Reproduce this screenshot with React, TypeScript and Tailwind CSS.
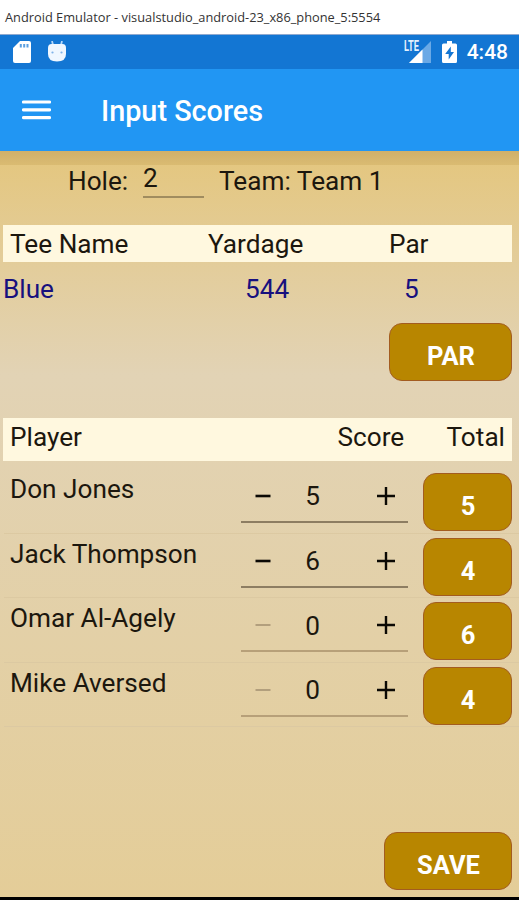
import clsx from "clsx";

interface Player {
  name: string;
  score: number;
  total: number;
}

const players: Player[] = [
  { name: "Don Jones", score: 5, total: 5 },
  { name: "Jack Thompson", score: 6, total: 4 },
  { name: "Omar Al-Agely", score: 0, total: 6 },
  { name: "Mike Aversed", score: 0, total: 4 },
];

function StatusBar() {
  return (
    <div className="flex h-[34px] items-center bg-[#1376d3] pr-[11px] pl-[13px] text-white">
      <svg width="18" height="22" viewBox="0 0 18 22" aria-hidden="true">
        <path d="M7 0h9a2 2 0 0 1 2 2v18a2 2 0 0 1-2 2H2a2 2 0 0 1-2-2V7z" fill="#fff" />
        <path d="M7.800 3v3.500M11.200 3v3.500M14.500 3v3.500" stroke="#5b9fe0" strokeWidth="2" />
      </svg>
      <svg className="ml-[17px]" width="18" height="22" viewBox="0 0 18 22" aria-hidden="true">
        <path d="M4 0l1 4M14 0l-1 4" stroke="#b5d7f9" strokeWidth="1.800" />
        <path d="M0 7q0-4 3.500-4h11q3.500 0 3.500 4v6q0 7.500-9 7.500t-9-7.500z" fill="#f0f7ff" />
        <circle cx="4.500" cy="11.500" r="1.100" fill="#7fb3e8" />
        <circle cx="13.500" cy="11.500" r="1.100" fill="#7fb3e8" />
      </svg>
      <div className="relative ml-auto h-[22px] w-[27px]">
        <svg className="absolute right-0 bottom-0" width="22" height="22" viewBox="0 0 22 22" aria-hidden="true">
          <path d="M22 0v22H0z" fill="#6aa9e6" />
          <path d="M13.500 8.500V22H0z" fill="#fff" />
        </svg>
        <span className="absolute top-0 left-0 origin-left scale-x-[0.66] text-[14px] leading-[10px] font-bold text-[#e3f0fd]">
          LTE
        </span>
      </div>
      <svg className="ml-[11px]" width="15" height="22" viewBox="0 0 15 22" aria-hidden="true">
        <path d="M5 0h5v2.500h3.500A1.500 1.500 0 0 1 15 4v16.500a1.500 1.500 0 0 1-1.500 1.500h-12A1.500 1.500 0 0 1 0 20.500V4a1.500 1.500 0 0 1 1.500-1.500H5z" fill="#fff" />
        <path d="M8.800 5.500L3.200 13h3.500v5.500L12 11H8.800z" fill="#1376d3" />
      </svg>
      <span className="ml-[10px] pt-px text-[21px] leading-none font-medium">4:48</span>
    </div>
  );
}

function GoldButton({ label, className }: { label: string | number; className?: string }) {
  return (
    <button
      type="button"
      className={clsx(
        "flex h-[58px] shrink-0 items-center justify-center rounded-[13px] border border-[#a35c20] bg-[#b88600] pt-[10px] pl-px text-[25.500px] leading-none font-bold text-white",
        className,
      )}
    >
      {label}
    </button>
  );
}

function Stepper({ value }: { value: number }) {
  const empty = value === 0;
  return (
    <div
      className={clsx(
        "flex h-[50px] w-[167px] items-center border-b-2 pr-[13px] pl-[14px]",
        empty ? "border-[#b7a079]" : "border-[#8d7d62]",
      )}
    >
      <svg className="mb-[2px]" width="16" height="18" viewBox="0 0 16 18" aria-label="Decrease">
        <path
          d="M0.500 9h15"
          stroke={empty ? "#b29f7d" : "#0b0904"}
          strokeWidth={empty ? 2 : 2.600}
        />
      </svg>
      <span className="w-[83px] text-center">{value}</span>
      <svg className="mb-[2px] ml-auto" width="18" height="18" viewBox="0 0 18 18" aria-label="Increase">
        <path d="M0 9h18M9 0v18" stroke="#0b0904" strokeWidth="2.400" />
      </svg>
    </div>
  );
}

function PlayerRow({ player }: { player: Player }) {
  return (
    <div className="ml-1 flex h-[64.600px] items-start border-b border-[#dcc9a2] pt-1 pl-[6px]">
      <span className="w-[231px] leading-[32px]">{player.name}</span>
      <Stepper value={player.score} />
      <GoldButton label={player.total} className="ml-[15px] w-[89px]" />
    </div>
  );
}

export default function App() {
  return (
    <div className="flex h-[900px] w-[519px] flex-col overflow-hidden bg-black font-['Roboto',sans-serif] text-[26.200px] text-[#1c170e]">
      <div className="flex h-[35px] items-center border-b border-[#8fa9cf] bg-white pt-px pl-[5px] font-['Open_Sans',sans-serif] text-[12.800px] whitespace-nowrap text-[#333]">
        Android Emulator - visualstudio_android-23_x86_phone_5:5554
      </div>
      <StatusBar />
      <header className="flex h-[82px] items-center bg-[#2196f3] pl-[22px] text-white">
        <svg width="29" height="20" viewBox="0 0 29 20" aria-label="Menu">
          <path d="M1.500 2h26M1.500 9.800h26M1.500 17.600h26" stroke="#fff" strokeWidth="3.200" strokeLinecap="round" />
        </svg>
        <h1 className="ml-[50px] pt-[3px] text-[28.800px] font-medium">Input Scores</h1>
      </header>

      <main className="flex h-[746px] flex-col bg-linear-to-b from-[#e4c67d] via-[#e2d3b5] via-30% to-[#e4cd98]">
        <div className="h-[14px] shrink-0 bg-linear-to-b from-[#d0b06a] to-[#dabb72]" />
        <div className="flex h-[60px] shrink-0 items-start pl-[68px] leading-8">
          <span className="w-[75px]">Hole:</span>
          <span className="h-[33px] w-[61px] border-b-2 border-[#a08c5f] leading-[26px]">2</span>
          <span className="ml-[15px]">Team: Team 1</span>
        </div>

        <div className="mr-[7px] ml-[3px] flex h-[37px] shrink-0 items-center bg-[#fff8df] pt-[2px] pl-[7px]">
          <span className="w-[198px]">Tee Name</span>
          <span className="w-[181px]">Yardage</span>
          <span>Par</span>
        </div>
        <div className="flex h-[55px] shrink-0 items-center pl-[3px] text-[#17107e]">
          <span className="w-[242px]">Blue</span>
          <span className="w-[159px]">544</span>
          <span>5</span>
        </div>
        <GoldButton label="PAR" className="mt-[6px] mr-[7px] w-[123px] self-end" />

        <div className="mt-[37px] mr-[7px] ml-[3px] flex h-[43px] shrink-0 items-center bg-[#fff8df] pr-[7px] pb-[3px] pl-[7px]">
          <span className="flex-1">Player</span>
          <span className="w-[109px]">Score</span>
          <span>Total</span>
        </div>
        <div className="pt-2">
          {players.map((player) => (
            <PlayerRow key={player.name} player={player} />
          ))}
        </div>

        <GoldButton label="SAVE" className="mt-auto mr-[7px] mb-[7px] w-[128px] self-end" />
      </main>
    </div>
  );
}
